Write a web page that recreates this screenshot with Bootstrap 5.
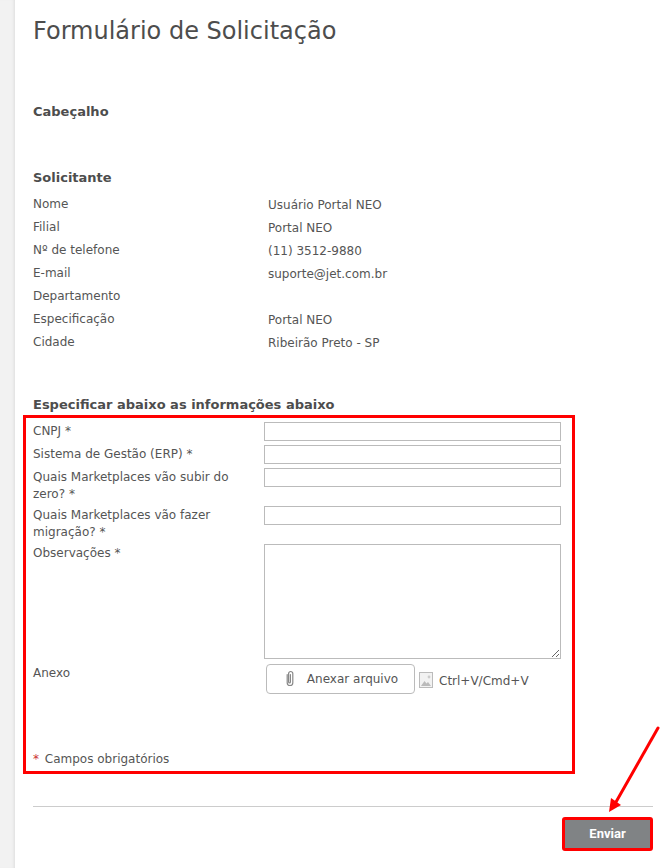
<!DOCTYPE html>
<html lang="pt-BR">
<head>
<meta charset="utf-8">
<title>Formulário de Solicitação</title>
<link rel="stylesheet" href="https://cdn.jsdelivr.net/npm/bootstrap@5.3.0/dist/css/bootstrap.min.css">
<style>
html,body{height:100%;overflow:hidden}
body{background:#fff;font-family:"DejaVu Sans",sans-serif;font-size:12px;line-height:17px;color:#555}
.side-strip{width:15px;height:868px;flex:none;background:#f2f2f2;box-shadow:inset -3px 0 3px -2px #ddd}
.page-main{width:656px;height:868px;position:relative;flex:none}
.page-title{font-size:24px;font-weight:400;line-height:30px;color:#4d4d4d;margin:16px 0 0 18px}
.sec-head{font-size:13px;font-weight:700;line-height:17px;color:#4d4d4d;margin:0 0 0 18px}
.sec-one{margin-top:57px}
.sec-two{margin-top:49px}
.sec-three{margin-top:39px}
.info-row{height:23px;margin-left:18px}
.info-first{margin-top:10px}
.info-label{width:235px;flex:none}
.info-val{padding-top:1px}
.red-box{width:552px;height:359px;margin:2px 0 0 8px;border:3px solid #f00;padding:4px 11px 0 7px}
.field-row{min-height:23px}
.lab-col{width:231px;flex:none;padding-top:1px}
.text-in{display:block;width:297px;height:19px;border:1px solid #bbb;background:#fff;padding:0 3px;border-radius:0;outline:0}
.area-in{display:block;width:297px;height:115px;border:1px solid #bbb;background:#fff;padding:2px 3px;border-radius:0;outline:0;font-size:12px}
.row-tall{height:38px}
.row-area{height:120px}
.row-file{height:86px}
.attach-btn{width:149px;height:30px;margin-left:2px;border:1px solid #bbb;border-radius:4px;background:#fff;color:#555;font-size:12px;line-height:17px;padding:0 0 1px 1px}
.clip-ico{margin-right:11px;vertical-align:-4px}
.paste-txt{margin-left:6px;padding-top:9px}
.pic-ico{margin-top:8px}
.req-note{padding-top:1px}
.req-star{color:#c33;margin-right:2px}
.sep-line{height:1px;background:#ccc;margin:32px 18px 0 18px;border:0;opacity:1}
.send-btn{width:91px;height:34px;margin:10px 0 0 547px;display:block;border:3px solid #f00;border-radius:3px;background:#808385;color:#fff;font-size:13px;font-weight:700;font-family:"Roboto",sans-serif;line-height:17px;padding:0 0 2px}
.arrow-mark{position:absolute;left:585px;top:720px}
</style>
</head>
<body class="d-flex">
<div class="side-strip"></div>
<main class="page-main">
  <h1 class="page-title">Formulário de Solicitação</h1>
  <h2 class="sec-head sec-one">Cabeçalho</h2>
  <h2 class="sec-head sec-two">Solicitante</h2>
  <div class="d-flex info-row info-first"><div class="info-label">Nome</div><div class="info-val">Usuário Portal NEO</div></div>
  <div class="d-flex info-row"><div class="info-label">Filial</div><div class="info-val">Portal NEO</div></div>
  <div class="d-flex info-row"><div class="info-label">Nº de telefone</div><div class="info-val">(11) 3512-9880</div></div>
  <div class="d-flex info-row"><div class="info-label">E-mail</div><div class="info-val">suporte@jet.com.br</div></div>
  <div class="d-flex info-row"><div class="info-label">Departamento</div><div class="info-val"></div></div>
  <div class="d-flex info-row"><div class="info-label">Especificação</div><div class="info-val">Portal NEO</div></div>
  <div class="d-flex info-row"><div class="info-label">Cidade</div><div class="info-val">Ribeirão Preto - SP</div></div>
  <h2 class="sec-head sec-three">Especificar abaixo as informações abaixo</h2>
  <form class="red-box">
    <div class="d-flex field-row"><label class="lab-col" for="f1">CNPJ *</label><input class="text-in" id="f1" type="text"></div>
    <div class="d-flex field-row"><label class="lab-col" for="f2">Sistema de Gestão (ERP) *</label><input class="text-in" id="f2" type="text"></div>
    <div class="d-flex field-row row-tall"><label class="lab-col" for="f3">Quais Marketplaces vão subir do zero? *</label><input class="text-in" id="f3" type="text"></div>
    <div class="d-flex field-row row-tall"><label class="lab-col" for="f4">Quais Marketplaces vão fazer migração? *</label><input class="text-in" id="f4" type="text"></div>
    <div class="d-flex field-row row-area"><label class="lab-col" for="f5">Observações *</label><textarea class="area-in" id="f5"></textarea></div>
    <div class="d-flex field-row row-file">
      <div class="lab-col">Anexo</div>
      <button type="button" class="attach-btn">
        <svg class="clip-ico" width="12" height="17" viewBox="0 0 12 17" fill="none" stroke="#888" stroke-width="1.2" stroke-linecap="round"><path d="M3.2 4.5v8.2a2.8 2.8 0 0 0 5.6 0V3.6a2.1 2.1 0 0 0-4.2 0v8.4a.9.9 0 0 0 1.8 0V4.5"/></svg>Anexar arquivo
      </button>
      <svg class="pic-ico ms-1" width="14" height="16" viewBox="0 0 14 16"><rect x=".5" y=".5" width="13" height="15" fill="#f2f2f2" stroke="#bbb"/><circle cx="10" cy="5" r="1.4" fill="#ccc"/><path d="M2 14l3.5-5 2 2.5 1.5-1.5 3 4z" fill="#bbb"/></svg>
      <div class="paste-txt">Ctrl+V/Cmd+V</div>
    </div>
    <div class="req-note"><span class="req-star">*</span> Campos obrigatórios</div>
  </form>
  <hr class="sep-line">
  <button type="button" class="send-btn">Enviar</button>
  <svg class="arrow-mark" width="70" height="100" viewBox="0 0 70 100"><path d="M58 8L16 82" stroke="#f00" stroke-width="3" stroke-linecap="round" fill="none"/><path d="M9 92L11 78 21 85z" fill="#f00"/></svg>
</main>
<script src="https://cdn.jsdelivr.net/npm/bootstrap@5.3.0/dist/js/bootstrap.bundle.min.js"></script>
</body>
</html>
